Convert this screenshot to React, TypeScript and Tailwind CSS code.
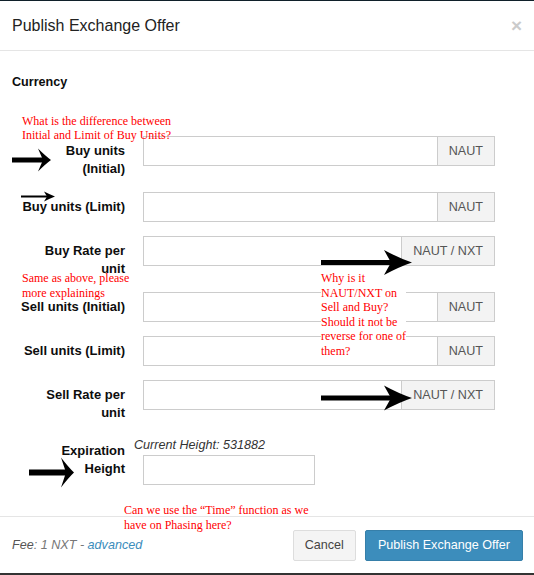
import React from "react";

function Arrow({ x1, x2, y, t, hx, hy, tip, notch }: { x1: number; x2: number; y: number; t: number; hx: number; hy: number; tip: number; notch: number }) {
  return (
    <g fill="#000">
      <rect x={x1} y={y - t / 2} width={x2 - x1} height={t} />
      <path d={`M${tip} ${y} Q${(tip + hx) / 2 + 1} ${y - hy * 0.35} ${hx} ${y - hy} L${notch} ${y} L${hx} ${y + hy} Q${(tip + hx) / 2 + 1} ${y + hy * 0.35} ${tip} ${y} Z`} />
    </g>
  );
}

function Group({ addon }: { addon: string }) {
  return (
    <div className="flex w-[352px] h-[30px]">
      <div className="flex-1 h-[30px] border border-[#cccccc] bg-white" />
      <div className="h-[30px] border border-l-0 border-[#cccccc] bg-[#f3f3f3] text-[#555] px-[11px] flex items-center text-[12.6px] whitespace-nowrap">
        {addon}
      </div>
    </div>
  );
}

function Row({ label, addon, mb = true }: { label: React.ReactNode; addon: string; mb?: boolean }) {
  return (
    <div className={`flex items-start ${mb ? "mb-[14px]" : ""}`}>
      <div className="w-[113px] pt-[6px] text-right font-bold text-[13px] leading-[18px] text-[#0d0d0d]">{label}</div>
      <div className="ml-[18px]">
        <Group addon={addon} />
      </div>
    </div>
  );
}

export default function App() {
  return (
    <div className="relative w-[534px] h-[575px] overflow-hidden bg-white flex flex-col font-['Liberation_Sans',Arial,sans-serif]">
      <div className="h-px shrink-0 bg-[#10202a]" />
      <div className="h-[50px] shrink-0 border-b border-[#e5e5e5] flex items-center justify-between pl-[12px] pr-[12px]">
        <span className="text-[16px] leading-none text-[#222]">Publish Exchange Offer</span>
        <span className="text-[19px] font-bold leading-none text-[#cbcbcb]">×</span>
      </div>
      <div className="flex-1 pl-[12px] pt-[22px]">
        <div className="text-[12.6px] font-bold leading-[18px] text-[#0d0d0d]">Currency</div>
        <div className="mt-[45px] flex flex-col">
          <Row label={<>Buy units<br />(Initial)</>} addon="NAUT" />
          <Row label="Buy units (Limit)" addon="NAUT" />
          <Row label={<>Buy Rate per<br />unit</>} addon="NAUT / NXT" />
          <Row label="Sell units (Initial)" addon="NAUT" />
          <Row label="Sell units (Limit)" addon="NAUT" />
          <Row label={<>Sell Rate per<br />unit</>} addon="NAUT / NXT" />
          <div className="flex items-start">
            <div className="w-[113px] pt-[6px] text-right font-bold text-[13px] leading-[18px] text-[#0d0d0d]">
              Expiration<br />Height
            </div>
            <div className="ml-[18px]">
              <div className="italic text-[12.6px] leading-[19px] ml-[-9px] text-[#333]">Current Height: 531882</div>
              <div className="w-[172px] h-[30px] border border-[#cccccc]" />
            </div>
          </div>
        </div>
      </div>
      <div className="h-[57px] shrink-0 border-t border-[#e5e5e5] flex items-center justify-between pl-[12px] pr-[11px]">
        <span className="italic text-[12.6px] text-[#777]">
          <span className="text-[#555]">Fee</span>: 1 NXT - <span className="text-[#3c8dbc]">advanced</span>
        </span>
        <div className="flex gap-[9px]">
          <button className="h-[31px] px-[11px] bg-[#f4f4f4] border border-[#dddddd] text-[#444] text-[12.6px] rounded-[2px]">Cancel</button>
          <button className="h-[31px] px-[12px] bg-[#3c8dbc] border border-[#367fa9] text-white text-[12.6px] rounded-[2px]">Publish Exchange Offer</button>
        </div>
      </div>
      <div className="h-[2px] shrink-0 bg-[#333]" />

      <div className="absolute left-[22px] top-[114px] text-[12px] leading-[14px] text-[#ff0000] font-['Liberation_Serif',serif] whitespace-nowrap">
        What is the difference between<br />Initial and Limit of Buy Units?
      </div>
      <div className="absolute left-[22px] top-[271px] text-[12px] leading-[15px] text-[#ff0000] font-['Liberation_Serif',serif] whitespace-nowrap">
        Same as above, please<br />more explainings
      </div>
      <div className="absolute left-[321px] top-[271px] bg-white text-[12px] leading-[14.5px] text-[#ff0000] font-['Liberation_Serif',serif] whitespace-nowrap">
        Why is it<br />NAUT/NXT on<br />Sell and Buy?<br />Should it not be<br />reverse for one of<br />them?
      </div>
      <div className="absolute left-[124px] top-[503px] text-[12px] leading-[15px] text-[#ff0000] font-['Liberation_Serif',serif] whitespace-nowrap">
        Can we use the “Time” function as we<br />have on Phasing here?
      </div>

      <svg className="absolute left-0 top-0 pointer-events-none" width={534} height={575}>
        <Arrow x1={12} x2={44} y={160} t={5} hx={38} hy={11.5} tip={51} notch={43} />
        <Arrow x1={21} x2={48} y={196.5} t={2} hx={44} hy={5} tip={55} notch={47} />
        <Arrow x1={321} x2={392} y={262.5} t={5} hx={384} hy={12.5} tip={412} notch={391} />
        <Arrow x1={321} x2={392} y={398} t={5} hx={384} hy={12.5} tip={412} notch={391} />
        <Arrow x1={29} x2={66} y={472.5} t={6} hx={61} hy={15} tip={74} notch={66} />
      </svg>
    </div>
  );
}
